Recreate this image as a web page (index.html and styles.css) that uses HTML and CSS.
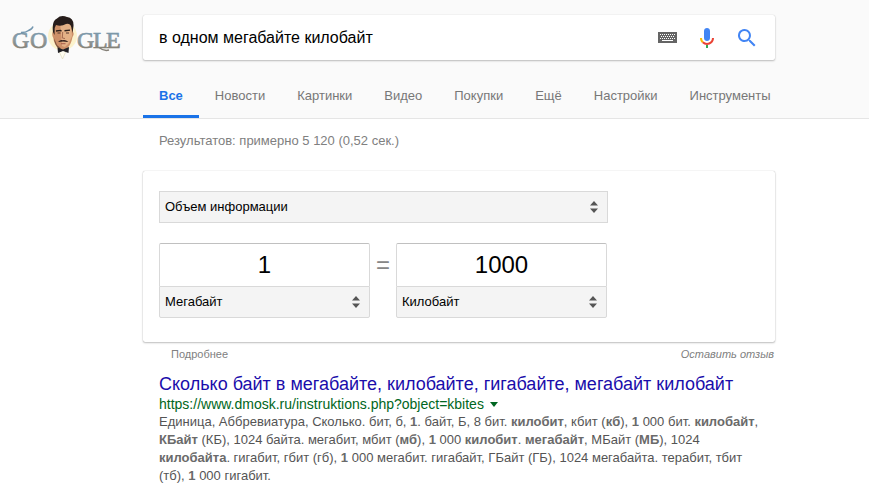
FILE: index.html
```html
<!DOCTYPE html>
<html lang="ru">
<head>
<meta charset="utf-8">
<meta name="viewport" content="width=device-width, initial-scale=1">
<title>в одном мегабайте килобайт</title>
<link rel="stylesheet" href="styles.css">
</head>
<body>
<header class="header">
  <a class="logo" href="#" aria-label="Google">
    <svg width="116" height="48" viewBox="8 15 116 48">
      <defs>
        <linearGradient id="ink" gradientUnits="userSpaceOnUse" x1="0" y1="29" x2="0" y2="50">
          <stop offset="0" stop-color="#6f94ad"/>
          <stop offset=".5" stop-color="#8d9ca2"/>
          <stop offset="1" stop-color="#817a6c"/>
        </linearGradient>
      </defs>
      <circle cx="62.500" cy="36" r="14.500" fill="#fbf2cc"/>
      <g class="logo-text" fill="url(#ink)" stroke="url(#ink)" stroke-width=".7">
        <text x="12" y="48">G</text>
        <text x="30" y="48">O</text>
        <text x="77" y="48">G</text>
        <text x="93" y="48">L</text>
        <text x="106" y="48">E</text>
      </g>
      <path d="M21 32.500Q26 32.500 28.500 30.500Q32 29.500 33 26.500" fill="none" stroke="#7396ae" stroke-width="1.500"/>
      <path d="M99 47.500Q104 51.500 109 50" fill="none" stroke="#858078" stroke-width="1.500"/>
      <path d="M58 49L62.500 59L67 49z" fill="#fffdf1" stroke="#ddd6b5" stroke-width=".6"/>
      <path d="M53.500 30L54 24Q56 18 62 17Q69 16 72 22L73 32Q74.500 34 72.500 37Q71 45 67 48.500L62.500 50L58 48Q54 44 53.300 38Q51 34 53.500 30z" fill="#cd9068"/>
      <path d="M60 21L71 24L72 36L69 43L65 47L62 46z" fill="#e3b186"/>
      <path d="M53 32Q51.500 21 57 18.500Q61 14.500 67 17Q74 18 73.500 26L72.500 33L71.300 27Q70 23 66 24Q61 27 56 25L54.700 28L54.500 35z" fill="#261d1b"/>
      <path d="M56 31l4.500-.6 1 .9M64.500 30.700l5.500-.6" fill="none" stroke="#2c211c" stroke-width="1.400"/>
      <path d="M57.500 33h3M66 33h3" stroke="#55392e" stroke-width="1"/>
      <path d="M62.700 32L62.300 38L65 38.500" fill="none" stroke="#9c6248" stroke-width=".9"/>
      <path d="M58 42Q60.500 39.500 62.800 40.200Q65.500 39.500 68.500 42L63 41.600z" fill="#2c1c18"/>
      <path d="M61 43.700h4.500" stroke="#a85e4a"/>
      <path d="M54 38L57 45L61 48.500L59 49Q54.500 45 54 38z" fill="#79523d"/>
      <path d="M57.500 47.500L63 49.500L69 47L68.500 53L63 51L58 53z" fill="#222126"/>
    </svg>
  </a>
  <div class="header-main">
    <form class="search" role="search">
      <input class="search-input" type="text" aria-label="Поиск" value="в одном мегабайте килобайт">
      <button class="icon-button" type="button" aria-label="Экранная клавиатура">
        <svg width="20" height="11" viewBox="0 0 20 11">
          <path fill="#656565" d="M1 0h19v11H1z"/>
          <path d="M3 2.500h15M4 4.500h14M3 6.500h15" stroke="#fff" stroke-width="1" stroke-dasharray="1 1"/>
          <path d="M5 8.500h11" stroke="#fff"/>
        </svg>
      </button>
      <button class="icon-button" type="button" aria-label="Голосовой поиск">
        <svg width="24" height="25" viewBox="0 -1 24 25">
          <path fill="#4285f4" d="M12 15c1.700 0 3-1.300 3-3V5c0-1.700-1.300-3-3-3S9 3.300 9 5v7c0 1.700 1.300 3 3 3z"/>
          <path fill="#34a853" d="M11 18.900h2V22h-2z"/>
          <path fill="#fbbc05" d="M7 12H5c0 1.900.8 3.700 2.100 5l1.400-1.400A5 5 0 0 1 7 12z"/>
          <path fill="#ea4335" d="M12 17a5 5 0 0 1-3.500-1.400L7.100 17a7 7 0 0 0 4.900 2c3.900 0 7-3.100 7-7h-2a5 5 0 0 1-5 5z"/>
        </svg>
      </button>
      <button class="icon-button" type="submit" aria-label="Найти">
        <svg width="24" height="25" viewBox="0 -1 24 25">
          <path fill="#4285f4" d="M15.500 14h-.8l-.3-.3A6.500 6.500 0 1 0 13.700 14.400l.3.300v.8l5 5 1.500-1.500zM9.500 14a4.500 4.500 0 1 1 0-9 4.500 4.500 0 0 1 0 9z"/>
        </svg>
      </button>
    </form>
    <nav class="tabs">
      <a class="tab tab-active" href="#">Все</a>
      <a class="tab" href="#">Новости</a>
      <a class="tab" href="#">Картинки</a>
      <a class="tab" href="#">Видео</a>
      <a class="tab" href="#">Покупки</a>
      <a class="tab" href="#">Ещё</a>
      <a class="tab" href="#">Настройки</a>
      <a class="tab" href="#">Инструменты</a>
    </nav>
  </div>
</header>
<main class="content">
  <p class="stats">Результатов: примерно 5 120 (0,52 сек.)</p>
  <section class="card">
    <div class="converter">
      <div class="select-wrap">
        <select class="select" aria-label="Величина"><option>Объем информации</option></select>
        <svg class="arrows" width="8" height="12" viewBox="0 0 8 12"><path fill="#555" d="M4 0l4 4.500H0zM0 7.500h8L4 12z"/></svg>
      </div>
      <div class="units">
        <div class="unit">
          <input class="amount" type="text" aria-label="Мегабайт" value="1">
          <div class="select-wrap">
            <select class="select" aria-label="Исходная единица"><option>Мегабайт</option></select>
            <svg class="arrows" width="8" height="12" viewBox="0 0 8 12"><path fill="#555" d="M4 0l4 4.500H0zM0 7.500h8L4 12z"/></svg>
          </div>
        </div>
        <span class="equals">=</span>
        <div class="unit">
          <input class="amount" type="text" aria-label="Килобайт" value="1000">
          <div class="select-wrap">
            <select class="select" aria-label="Конечная единица"><option>Килобайт</option></select>
            <svg class="arrows" width="8" height="12" viewBox="0 0 8 12"><path fill="#555" d="M4 0l4 4.500H0zM0 7.500h8L4 12z"/></svg>
          </div>
        </div>
      </div>
    </div>
  </section>
  <div class="card-links">
    <a href="#">Подробнее</a>
    <a class="feedback" href="#">Оставить отзыв</a>
  </div>
  <article class="result">
    <h3 class="result-title"><a href="#">Сколько байт в мегабайте, килобайте, гигабайте, мегабайт килобайт</a></h3>
    <div class="result-url"><cite>https://www.dmosk.ru/instruktions.php?object=kbites</cite><span class="caret"></span></div>
    <p class="snippet">Единица, Аббревиатура, Сколько. бит, б, <b>1</b>. байт, Б, 8 бит. <b>килобит</b>, кбит (<b>кб</b>), <b>1</b> 000 бит. <b>килобайт</b>, <b>КБайт</b> (КБ), 1024 байта. мегабит, мбит (<b>мб</b>), <b>1</b> 000 <b>килобит</b>. <b>мегабайт</b>, МБайт (<b>МБ</b>), 1024 <b>килобайта</b>. гигабит, гбит (гб), <b>1</b> 000 мегабит. гигабайт, ГБайт (ГБ), 1024 мегабайта. терабит, тбит (тб), <b>1</b> 000 гигабит.</p>
  </article>
</main>
</body>
</html>
```
FILE: styles.css
```css
* {
  box-sizing: border-box;
}

body {
  margin: 0;
  background: #fff;
  color: #222;
  font-family: "Liberation Sans", Arial, sans-serif;
  font-size: 13px;
}

a {
  color: inherit;
  text-decoration: none;
}

input,
select,
button {
  margin: 0;
  border: 0;
  font-family: inherit;
}

.header {
  display: grid;
  grid-template-columns: 143px minmax(0, 632px);
  padding-top: 15px;
  border-bottom: 1px solid #e5e5e5;
  background: #fafafa;
}

.logo {
  padding-left: 8px;
}

.logo svg {
  display: block;
}

.logo-text {
  font-family: "Liberation Serif", serif;
  font-size: 24px;
}

.search {
  display: flex;
  align-items: center;
  height: 45px;
  padding: 0 8px 0 16px;
  border-radius: 2px;
  background: #fff;
  box-shadow: 0 1px 2px rgba(0, 0, 0, .24), 0 0 1px rgba(0, 0, 0, .2);
}

.search-input {
  flex: 1;
  min-width: 0;
  padding: 0;
  background: none;
  color: #000;
  font-size: 16px;
  outline: 0;
}

.icon-button {
  display: flex;
  align-items: center;
  justify-content: center;
  width: 40px;
  height: 45px;
  padding: 0;
  background: none;
}

.tabs {
  display: flex;
  margin-top: 14px;
  white-space: nowrap;
}

.tab {
  height: 44px;
  padding: 0 16px;
  border-bottom: 3px solid transparent;
  color: #777;
  line-height: 44px;
}

.tab-active {
  border-color: #1a73e8;
  color: #1a73e8;
  font-weight: bold;
}

.content {
  max-width: 775px;
  padding-left: 143px;
}

.stats {
  margin: 0;
  padding-left: 16px;
  color: #808080;
  line-height: 43px;
}

.card {
  margin-top: 9px;
  padding: 20px 16px 24px;
  border-radius: 2px;
  box-shadow: 0 1px 2px rgba(0, 0, 0, .24), 0 0 1px rgba(0, 0, 0, .3);
}

.converter {
  max-width: 449px;
}

.select-wrap {
  position: relative;
}

.select {
  display: block;
  width: 100%;
  height: 32px;
  padding: 0 24px 2px 5px;
  border: 1px solid #d9d9d9;
  border-radius: 0;
  appearance: none;
  background: #f4f4f4;
  color: #000;
  font-size: 13px;
}

.arrows {
  position: absolute;
  top: 10px;
  right: 10px;
  pointer-events: none;
}

.units {
  display: flex;
  max-width: 448px;
  margin-top: 20px;
}

.unit {
  flex: 1;
  min-width: 0;
}

.amount {
  display: block;
  width: 100%;
  height: 43px;
  padding: 0;
  border: 1px solid #d9d9d9;
  border-top-color: #c0c0c0;
  border-bottom: 0;
  border-radius: 2px 2px 0 0;
  color: #000;
  font-size: 24px;
  text-align: center;
}

.unit .select {
  border-radius: 0 0 2px 2px;
}

.equals {
  width: 26px;
  color: #878787;
  font-size: 24px;
  line-height: 43px;
  text-align: center;
}

.card-links {
  display: flex;
  justify-content: space-between;
  padding: 4px 1px 0 28px;
  color: #808080;
  font-size: 11px;
  line-height: 16px;
}

.feedback {
  font-style: italic;
}

.result {
  max-width: 616px;
  margin-top: 11px;
  padding-left: 16px;
}

.result-title {
  margin: 0;
  color: #1a0dab;
  font-size: 18px;
  font-weight: normal;
  line-height: 22px;
}

.result-url {
  display: flex;
  align-items: center;
  gap: 6px;
  color: #006621;
  font-size: 14px;
  line-height: 18px;
}

.result-url cite {
  font-style: normal;
}

.caret {
  border: 4px solid transparent;
  border-top: 5px solid #006621;
  border-bottom: 0;
}

.snippet {
  margin: 0;
  color: #545454;
  line-height: 18px;
}

.snippet b {
  color: #6a6a6a;
}
```
